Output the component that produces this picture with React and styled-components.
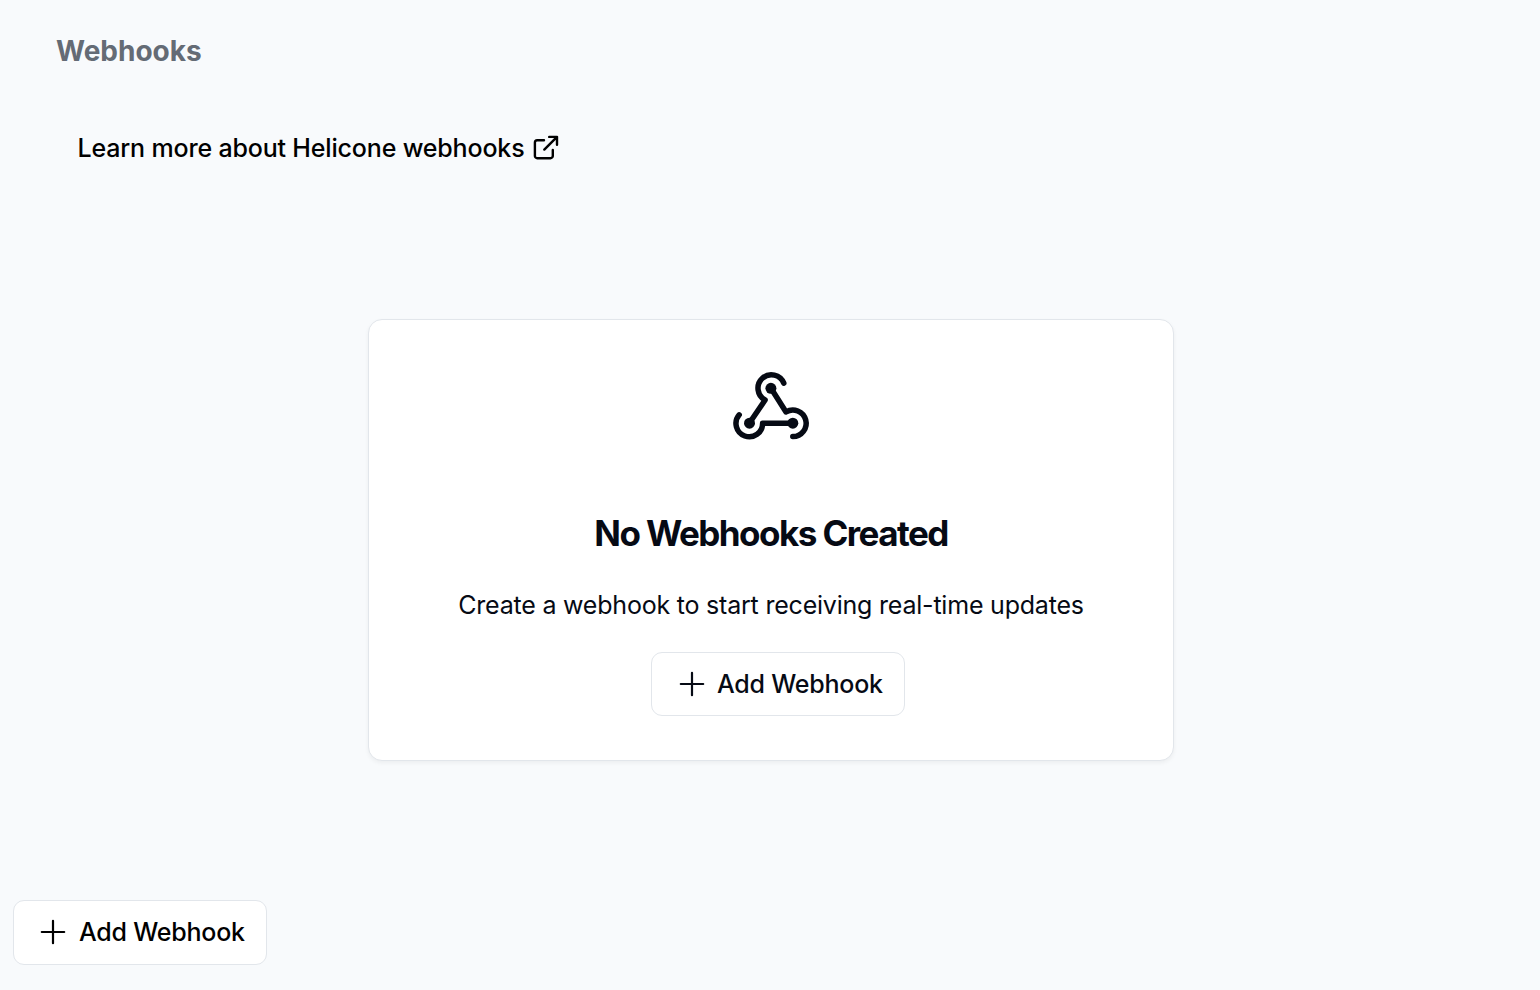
import React from "react";
import styled, { createGlobalStyle } from "styled-components";

const GlobalStyle = createGlobalStyle`
  *, *::before, *::after { box-sizing: border-box; }
  body {
    margin: 0;
    background: #f8fafc;
    color: #060a14;
    font-family: Inter, "Liberation Sans", sans-serif;
  }
`;

const Page = styled.div`
  display: flex;
  flex-direction: column;
  height: 990px;
  overflow: hidden;
`;

const PageTitle = styled.h1`
  margin: 31px 0 0 56px;
  font-size: 28px;
  line-height: 40px;
  font-weight: 700;
  letter-spacing: 0;
  color: #646b75;
`;

const DocsLink = styled.a`
  display: flex;
  align-items: center;
  gap: 5.5px;
  margin: 57px 0 0 77.5px;
  height: 40px;
  font-size: 25px;
  font-weight: 500;
  letter-spacing: -0.17px;
  white-space: nowrap;
  color: #000;
`;

const Card = styled.section`
  display: flex;
  flex-direction: column;
  align-items: center;
  width: 806px;
  height: 442px;
  margin: 151px 0 0 368px;
  padding-top: 46px;
  background: #fff;
  border: 1px solid #e2e6eb;
  border-radius: 14px;
  box-shadow: 0 2px 4px rgba(0, 0, 0, 0.05);
`;

const CardTitle = styled.h2`
  margin: 65px 0 0;
  font-size: 35px;
  line-height: 44px;
  font-weight: 650;
  letter-spacing: -1.56px;
  white-space: nowrap;
`;

const CardText = styled.p`
  margin: 32px 0 29px;
  font-size: 25px;
  line-height: 36px;
  letter-spacing: -0.21px;
  white-space: nowrap;
`;

const AddButton = styled.button`
  display: flex;
  flex: none;
  align-items: center;
  gap: ${(p) => 37 - p.$inset}px;
  width: 254px;
  height: ${(p) => p.$height}px;
  margin: ${(p) => p.$margin};
  padding: 0 0 ${(p) => p.$height - 64}px ${(p) => p.$inset}px;
  background: #fff;
  border: 1px solid #e2e6eb;
  border-radius: 11px;
  font-family: inherit;
  font-size: 25px;
  font-weight: 500;
  letter-spacing: -0.22px;
  white-space: nowrap;
  color: ${(p) => p.$color};
`;

const Icon = styled.svg`
  display: block;
  flex: none;
  fill: none;
  stroke: currentColor;
`;

const ExternalIcon = () => (
  <Icon width="30" height="30" viewBox="0 0 30 30" strokeWidth="2.4" strokeLinecap="round" strokeLinejoin="round">
    <path d="M14 7.2H7.2a2.3 2.3 0 0 0-2.3 2.3v13.4a2.3 2.3 0 0 0 2.3 2.3h13.3a2.3 2.3 0 0 0 2.3-2.3V17" />
    <path d="M19.2 3.9h7.8v7.8M27 3.9L14.3 16.6" />
  </Icon>
);

const PlusIcon = () => (
  <Icon width="28" height="28" viewBox="0 0 28 28" strokeWidth="2.2" strokeLinecap="round">
    <path d="M14 2.8v22.4M2.8 14h22.4" />
  </Icon>
);

const WebhookIcon = () => (
  <Icon width="80" height="80" viewBox="731 366 80 80" strokeWidth="5.5" strokeLinecap="round" strokeLinejoin="round">
    <path d="M783.8 383.1A13.4 13.4 0 1 0 765.1 400L749.3 423.2" />
    <path d="M739.2 414.8A13.3 13.3 0 1 0 762.6 423.2H793" />
    <path d="M792.8 436.6A13.3 13.3 0 1 0 786 411.9L771 388.3" />
    <g fill="currentColor" stroke="none">
      <circle cx="770.9" cy="388.3" r="5.5" />
      <circle cx="749.5" cy="423.2" r="5.5" />
      <circle cx="792.8" cy="423.2" r="5.5" />
    </g>
  </Icon>
);

const AddWebhook = ({ height, margin, color, inset }) => (
  <AddButton type="button" $height={height} $margin={margin} $color={color} $inset={inset}>
    <PlusIcon />
    <span>Add Webhook</span>
  </AddButton>
);

export default function App() {
  return (
    <Page>
      <GlobalStyle />
      <PageTitle>Webhooks</PageTitle>
      <DocsLink>
        <span>Learn more about Helicone webhooks</span>
        <ExternalIcon />
      </DocsLink>
      <Card>
        <WebhookIcon />
        <CardTitle>No Webhooks Created</CardTitle>
        <CardText>Create a webhook to start receiving real-time updates</CardText>
        <AddWebhook height={64} margin="0 0 0 14px" color="#060a14" inset={26} />
      </Card>
      <AddWebhook height={65} margin="139px 0 0 13px" color="#000" inset={25} />
    </Page>
  );
}
